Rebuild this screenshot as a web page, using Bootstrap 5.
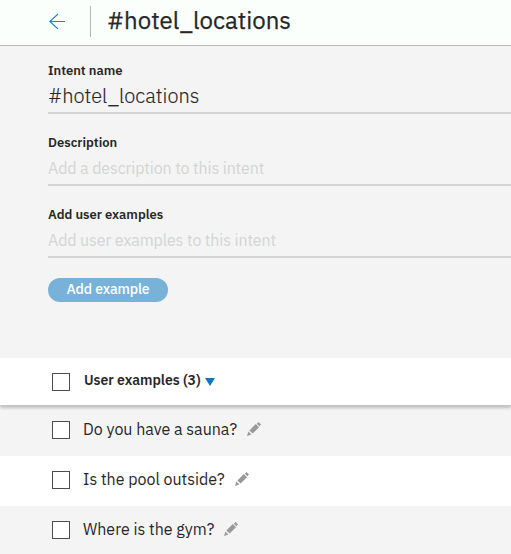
<!DOCTYPE html>
<html lang="en">
<head>
<meta charset="utf-8">
<meta name="viewport" content="width=device-width, initial-scale=1">
<title>#hotel_locations</title>
<link href="https://cdn.jsdelivr.net/npm/bootstrap@5.3.0/dist/css/bootstrap.min.css" rel="stylesheet">
<style>
body{font-family:"IBM Plex Sans",Roboto,"Liberation Sans",sans-serif;background:#f4f4f4;color:#272727;height:554px;overflow:hidden}
.topbar{height:46px;background:#fbfffb;border-bottom:1px solid #b9bab9;padding-left:48px}
.divider{width:1px;height:31px;background:#b5b8b5;margin:0 17px 3px 24px}
.title{font-size:24px;line-height:30px;font-weight:450;-webkit-text-stroke:.25px #272727;margin:0 0 6px -1px;white-space:nowrap}
.intent-form{height:312px;padding:16px 0 0 48px}
.field{height:72px}
.field label{font-size:13px;line-height:18px;font-weight:600;display:block}
.field .form-control{height:34px;border:0;border-bottom:2px solid #d3d3d3;border-radius:0;background:transparent;padding:0;font-size:16px;line-height:32px;color:#272727;box-shadow:none}
.field .name-input{font-size:20px;font-weight:300;padding-bottom:2px;-webkit-text-stroke:.15px #272727}
.field .form-control::placeholder{color:#d3d5d5;opacity:1;letter-spacing:-.12px}
.add-btn{width:120px;height:24px;border:0;background:#78b2d8;color:#fff;font-size:14px;line-height:22px;font-weight:500;letter-spacing:-.1px;padding:0 0 2px}
.add-btn:hover{background:#78b2d8;color:#fff}
.example-row{height:50px;padding:0 0 2px 52px;font-size:16px}
.example-row .form-check-input{width:18px;height:18px;margin:0 13px 0 0;border:1px solid #4c4c4c;border-radius:0;background:#fff;flex:none}
.example-row .label-text{margin-bottom:2px;white-space:nowrap}
.list-head{height:48px;padding-bottom:0;background:#fff;border-bottom:1px solid #c5c5c5;box-shadow:0 2px 3px rgba(0,0,0,.22);clip-path:inset(0 0 -6px 0);position:relative;font-size:14px;font-weight:600}
.head-text{margin:0 0 3px 1px;letter-spacing:-.03px}
.caret{width:10px;height:8px;margin:0 0 0 4px}
.pencil{width:14px;height:14px;margin:0 0 2px 10px}
</style>
</head>
<body>
<header class="topbar d-flex align-items-center">
<svg width="18" height="17" viewBox="0 0 18 17" fill="none" stroke="#2183c4" stroke-width="1.1" class="mb-1"><path d="M17 9.5H1.5M10 2 1.8 9.5 10 17"/></svg>
<div class="divider"></div>
<h1 class="title">#hotel_locations</h1>
</header>
<main>
<form class="intent-form">
<div class="field"><label for="n">Intent name</label><input id="n" class="form-control name-input" value="#hotel_locations"></div>
<div class="field"><label for="d">Description</label><input id="d" class="form-control" placeholder="Add a description to this intent"></div>
<div class="field"><label for="e">Add user examples</label><input id="e" class="form-control" placeholder="Add user examples to this intent"></div>
<button type="button" class="btn rounded-pill add-btn d-block">Add example</button>
</form>
<section>
<div class="example-row list-head d-flex align-items-center"><input class="form-check-input" type="checkbox" aria-label="Select all"><span class="head-text">User examples (3)</span><svg class="caret" viewBox="0 0 10 8"><path d="M0 0h10L5 8z" fill="#0f76c4"/></svg></div>
<div class="example-row d-flex align-items-center"><input class="form-check-input" type="checkbox" aria-label="Select"><span class="label-text">Do you have a sauna?</span><svg class="pencil" viewBox="0 0 14 14" fill="#999"><path d="M9.8 1.7 11.5 0 14 2.5 12.3 4.2zM8.8 2 12 5.2 5.6 11.6 2.4 8.4zM1.4 9.6l3 3L0 14z"/></svg></div>
<div class="example-row bg-white d-flex align-items-center"><input class="form-check-input" type="checkbox" aria-label="Select"><span class="label-text">Is the pool outside?</span><svg class="pencil" viewBox="0 0 14 14" fill="#999"><path d="M9.8 1.7 11.5 0 14 2.5 12.3 4.2zM8.8 2 12 5.2 5.6 11.6 2.4 8.4zM1.4 9.6l3 3L0 14z"/></svg></div>
<div class="example-row d-flex align-items-center"><input class="form-check-input" type="checkbox" aria-label="Select"><span class="label-text">Where is the gym?</span><svg class="pencil" viewBox="0 0 14 14" fill="#999"><path d="M9.8 1.7 11.5 0 14 2.5 12.3 4.2zM8.8 2 12 5.2 5.6 11.6 2.4 8.4zM1.4 9.6l3 3L0 14z"/></svg></div>
</section>
</main>
<script src="https://cdn.jsdelivr.net/npm/bootstrap@5.3.0/dist/js/bootstrap.bundle.min.js"></script>
</body>
</html>
